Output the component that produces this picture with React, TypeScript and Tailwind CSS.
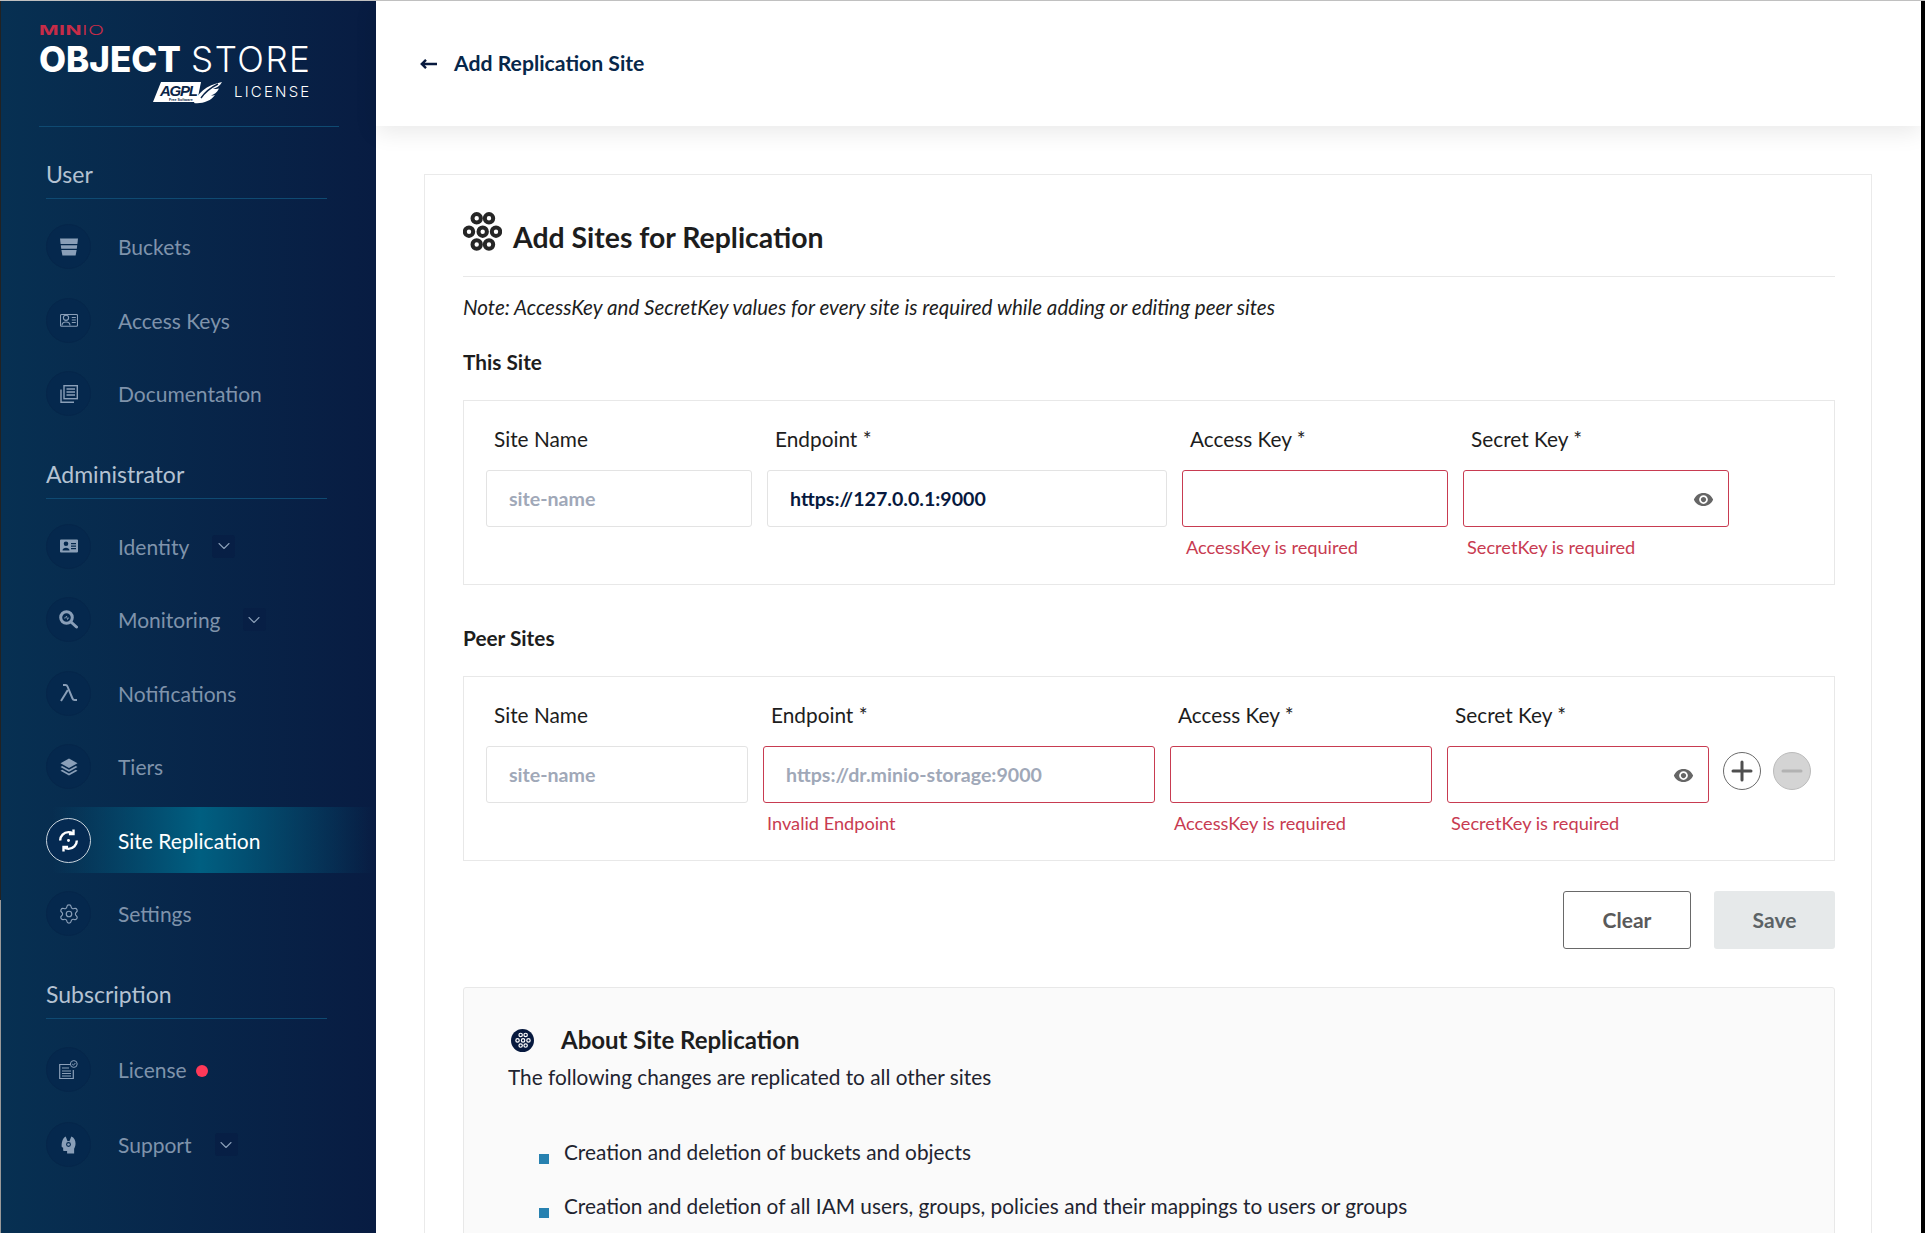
import type { ReactNode } from 'react';
import { ChevronDown, Settings } from 'lucide-react';

const EyeIcon = () => (
  <svg viewBox="0 0 24 24" className="w-[21px] h-[21px]" fill="#666">
    <path d="M12 4.5C7 4.5 2.73 7.61 1 12c1.73 4.39 6 7.5 11 7.5s9.27-3.11 11-7.5c-1.73-4.39-6-7.5-11-7.5zM12 17c-2.76 0-5-2.24-5-5s2.24-5 5-5 5 2.24 5 5-2.24 5-5 5zm0-8c-1.66 0-3 1.34-3 3s1.34 3 3 3 3-1.34 3-3-1.34-3-3-3z" />
  </svg>
);

const RingsIcon = ({ className, color, width }: { className: string; color: string; width: number }) => (
  <svg viewBox="0 0 39 42" className={className} fill="none" stroke={color} strokeWidth={width}>
    <circle cx="13.7" cy="7.3" r="4.2" />
    <circle cx="26" cy="7.3" r="4.2" />
    <circle cx="6" cy="20.7" r="4.2" />
    <circle cx="19.7" cy="20.7" r="4.2" />
    <circle cx="33" cy="20.7" r="4.2" />
    <circle cx="13.7" cy="33.5" r="4.2" />
    <circle cx="26" cy="33.5" r="4.2" />
  </svg>
);

const BucketIcon = () => (
  <svg viewBox="0 0 18 18" className="w-[18px] h-[18px]" fill="#8a9fb8">
    <path d="M0 0.5h18l-0.6 5.5H0.6z" />
    <path d="M0.8 7.2h16.4l-0.4 3.6H1.2z" />
    <path d="M1.4 12h15.2l-1 5.5H2.4z" />
  </svg>
);

const AccessIcon = () => (
  <svg viewBox="0 0 18 14" className="w-[18px] h-[14px]" fill="none" stroke="#8a9fb8" strokeWidth="1.1">
    <rect x="0.5" y="1.5" width="17" height="11.8" rx="1" />
    <circle cx="6" cy="4.8" r="2.6" />
    <path d="M2 12.5c0-4.6 8-4.6 8 0" />
    <path d="M11.8 4.5h4M11.8 7h4M11.8 9.5h4" />
  </svg>
);

const DocsIcon = () => (
  <svg viewBox="0 0 18 18" className="w-[18px] h-[18px]" fill="none" stroke="#8a9fb8" strokeWidth="1.4">
    <rect x="4" y="0.7" width="13.3" height="13" />
    <path d="M6.5 4h8.5M6.5 7h8.5M6.5 10h8.5" />
    <path d="M1 4.5v12.8h13" />
  </svg>
);

const IdentityIcon = () => (
  <svg viewBox="0 0 18 14" className="w-[18px] h-[14px]" fill="#8a9fb8">
    <path d="M1 0.5h16a1 1 0 0 1 1 1v11a1 1 0 0 1-1 1H1a1 1 0 0 1-1-1v-11a1 1 0 0 1 1-1zM6 2.5a2.3 2.3 0 1 0 0 4.6 2.3 2.3 0 0 0 0-4.6zM2.5 11.5h7c0-3.6-7-3.6-7 0zM11 4v1.2h5V4zM11 6.5v1.2h5V6.5zM11 9v1.2h5V9z" fillRule="evenodd" />
  </svg>
);

const MonitoringIcon = () => (
  <svg viewBox="0 0 19 19" className="w-[19px] h-[19px]" fill="none" stroke="#8a9fb8">
    <circle cx="7.5" cy="7.5" r="5.8" strokeWidth="3" />
    <path d="M12 12l5.5 5" strokeWidth="3" strokeLinecap="round" />
    <path d="M5 8h1.5l1-2 1 3.5.6-1.5h1" strokeWidth="0.8" />
  </svg>
);

const LambdaIcon = () => (
  <svg viewBox="0 0 18 18" className="w-[18px] h-[18px]" fill="none" stroke="#8a9fb8" strokeWidth="2">
    <path d="M3 1h2.5c1 0 1.6.5 2 1.5l5 12c.4 1 1 1.5 2 1.5H17" />
    <path d="M7.8 6L1 17" />
  </svg>
);

const TiersIcon = () => (
  <svg viewBox="0 0 18 18" className="w-[18px] h-[18px]" fill="#8a9fb8">
    <path d="M9 0.5l8.5 4.7L9 10 0.5 5.2z" />
    <path d="M2.2 8l6.8 3.7L15.8 8l1.7 1L9 13.7 0.5 9z" />
    <path d="M2.2 11.8l6.8 3.7 6.8-3.7 1.7 1L9 17.5 0.5 12.8z" />
  </svg>
);

const LicenseIcon = () => (
  <svg viewBox="0 0 19 19" className="w-[19px] h-[19px]" fill="none" stroke="#8a9fb8">
    <path d="M11 4.5H0.7v14h13.6V10" strokeWidth="1.2" />
    <path d="M3 8h7M3 11h9M3 13.5h9M3 16h9" strokeWidth="1.2" />
    <circle cx="14.8" cy="4" r="3.4" strokeWidth="1" />
    <path d="M13.2 4l1.2 1.2 2-2.2" strokeWidth="1" />
  </svg>
);

const SupportIcon = () => (
  <svg viewBox="0 0 16 19" className="w-[15px] h-[18px]" fill="#8a9fb8">
    <path d="M5 0.5L7 5.5a3.5 3.5 0 0 1 2 0L11 0.5c3 1 4.5 4 4.5 7.5 0 2.5-.8 4.5-1.5 5.5V18.5H6.5v-2.5H3.5c-1 0-1.2-.8-1.2-1.5v-2L0.8 11.5C0.4 8 1.5 2 5 0.5z" />
    <circle cx="8" cy="9" r="2.6" fill="#052a50" />
    <circle cx="8" cy="9" r="1.4" fill="#8a9fb8" />
  </svg>
);

const SyncIcon = () => (
  <svg viewBox="0 0 24 24" className="w-[25px] h-[25px]" fill="none" stroke="#ffffff" strokeWidth="2.3">
    <path d="M20 12a8 8 0 0 1-8 8c-1.6 0-3-.4-4.2-1.2" />
    <path d="M4 12a8 8 0 0 1 8-8c1.6 0 3 .4 4.2 1.2" />
    <path d="M16.8 1.5v4.4h-4.4" />
    <path d="M7.2 22.5v-4.4h4.4" />
    <circle cx="12" cy="12" r="1.4" fill="#ffffff" stroke="none" />
  </svg>
);

const SectionTitle = ({ title, className }: { title: string; className: string }) => (
  <div className={`ml-[45px] w-[281px] h-[37px] pb-[12px] border-b border-[#0f4a72] text-[23px] leading-[24px] text-[#b4c2d2] ${className}`}>
    {title}
  </div>
);

const NavItem = ({
  label,
  icon,
  chevron,
  chevronGap,
  dot,
  className = '',
}: {
  label: string;
  icon: ReactNode;
  chevron?: boolean;
  chevronGap?: string;
  dot?: boolean;
  className?: string;
}) => (
  <div className={`h-[73.5px] pl-[45px] flex items-center ${className}`}>
    <div className="w-[45px] h-[45px] rounded-full bg-[#05284d] border border-[#05264a] flex items-center justify-center">
      {icon}
    </div>
    <span className="ml-[27px] text-[21px] text-[#7f93ab]">{label}</span>
    {chevron && (
      <div className={`w-[23px] h-[23px] rounded-[3px] bg-[#071f45] flex items-center justify-center ${chevronGap}`}>
        <ChevronDown size={20} strokeWidth={1.3} color="#8a9fb8" />
      </div>
    )}
    {dot && <div className="ml-[9px] mt-[3px] w-[12px] h-[12px] rounded-full bg-[#ff3958]" />}
  </div>
);

const ActiveItem = ({ label }: { label: string }) => (
  <div className="h-[73.5px] flex items-center">
    <div className="ml-[51px] w-[322px] h-[66px] flex items-center bg-[linear-gradient(90deg,rgba(0,95,129,0)_0%,#005f81_46%,rgba(0,95,129,0)_100%)]">
      <div className="-ml-[6px] w-[45px] h-[45px] rounded-full bg-[#052a52] border-[1.5px] border-[#c9d4dd] flex items-center justify-center">
        <SyncIcon />
      </div>
      <span className="ml-[27px] text-[21px] text-white">{label}</span>
    </div>
  </div>
);

const Logo = () => (
  <div className="ml-[38px] w-[300px] h-[126px] pt-[21px] border-b border-[#0f4a72]">
    <div className="h-[16px] text-[13px] leading-[16px] tracking-[0.3px] text-[#c72c48] font-['Inter',sans-serif] origin-left scale-x-[1.62] whitespace-nowrap">
      <span className="font-bold">MIN</span>
      <span className="font-light">IO</span>
    </div>
    <div className="mt-[1px] h-[40px] text-[35px] leading-[40px] text-white font-['Inter',sans-serif] whitespace-nowrap">
      <span className="font-extrabold">OBJECT</span>
      <span className="font-light ml-[10px] tracking-[1.5px]">STORE</span>
    </div>
    <div className="mt-[1px] flex items-center">
      <svg viewBox="0 0 70 24" className="ml-[114px] w-[70px] h-[24px]">
        <path d="M8 2h40l-4 20H0z" fill="#ffffff" />
        <text x="7" y="15.5" fontFamily="Liberation Sans, sans-serif" fontStyle="italic" fontWeight="700" fontSize="15" fill="#0b2447" textLength="38">AGPL</text>
        <text x="16" y="20.5" fontFamily="Liberation Sans, sans-serif" fontSize="3.6" fontWeight="700" fill="#0b2447">Free Software</text>
        <path d="M41 23c3-9 12-18 28-21-2 4-6 6-9 7 2 0 4 0 6-.5-2 4-5 6-8 7 1 0 3 0 4-.5-4 6-13 9-21 8z" fill="#ffffff" />
        <path d="M48 18c4-6 9-10 17-14" stroke="#0b2447" strokeWidth="1.4" fill="none" />
      </svg>
      <span className="ml-[11px] text-[15px] leading-[20px] tracking-[2.2px] text-white font-['Inter',sans-serif] font-light">LICENSE</span>
    </div>
  </div>
);

const Sidebar = () => (
  <aside className="w-[375px] h-full shrink-0 bg-[linear-gradient(90deg,#073052_0%,#081c42_100%)]">
    <Logo />
    <SectionTitle title="User" className="mt-[35px]" />
    <div className="mt-[11px]">
      <NavItem label="Buckets" icon={<BucketIcon />} />
      <NavItem label="Access Keys" icon={<AccessIcon />} />
      <NavItem label="Documentation" icon={<DocsIcon />} />
    </div>
    <SectionTitle title="Administrator" className="mt-[31px]" />
    <div className="mt-[11px]">
      <NavItem label="Identity" icon={<IdentityIcon />} chevron chevronGap="ml-[23px]" />
      <NavItem label="Monitoring" icon={<MonitoringIcon />} chevron chevronGap="ml-[22px]" />
      <NavItem label="Notifications" icon={<LambdaIcon />} />
      <NavItem label="Tiers" icon={<TiersIcon />} />
      <ActiveItem label="Site Replication" />
      <NavItem label="Settings" icon={<Settings size={22} strokeWidth={1.3} color="#8a9fb8" />} />
    </div>
    <SectionTitle title="Subscription" className="mt-[31px]" />
    <div className="mt-[14px]">
      <NavItem label="License" icon={<LicenseIcon />} dot />
      <NavItem label="Support" icon={<SupportIcon />} chevron chevronGap="ml-[23px]" className="mt-[2px]" />
    </div>
  </aside>
);

const Field = ({
  label,
  width,
  placeholder,
  value,
  error,
  eye,
}: {
  label: string;
  width: string;
  placeholder?: string;
  value?: string;
  error?: string;
  eye?: boolean;
}) => (
  <div className={`${width} shrink-0`}>
    <div className="pl-[8px] h-[24px] text-[20.8px] leading-[24px] text-[#1d1d1d] mb-[19px]">{label}</div>
    <div className="relative h-[57px]">
      <input
        readOnly
        placeholder={placeholder}
        value={value ?? ''}
        className={`w-full h-full px-[22px] rounded-[3px] border outline-none bg-white text-[19.6px] font-bold text-[#07193e] placeholder:text-[#a0a8b8] ${
          error ? 'border-[#c83b51]' : 'border-[#e3e3e3]'
        }`}
      />
      {eye && (
        <div className="absolute right-[15px] top-[19px] flex">
          <EyeIcon />
        </div>
      )}
    </div>
    {error && <div className="mt-[10px] pl-[4px] h-[20px] text-[18.2px] leading-[20px] text-[#c83b51]">{error}</div>}
  </div>
);

const ThisSite = () => (
  <div className="mt-[26px] h-[185px] border border-[#e8e8e8] pl-[22px] pt-[26px] flex gap-[15px]">
    <Field label="Site Name" width="w-[266px]" placeholder="site-name" />
    <Field label="Endpoint *" width="w-[400px]" value="https://127.0.0.1:9000" />
    <Field label="Access Key *" width="w-[266px]" error="AccessKey is required" />
    <Field label="Secret Key *" width="w-[266px]" error="SecretKey is required" eye />
  </div>
);

const PeerSites = () => (
  <div className="mt-[26px] h-[185px] border border-[#e8e8e8] pl-[22px] pt-[26px] flex">
    <Field label="Site Name" width="w-[262px] mr-[15px]" placeholder="site-name" />
    <Field label="Endpoint *" width="w-[392px] mr-[15px]" placeholder="https://dr.minio-storage:9000" error="Invalid Endpoint" />
    <Field label="Access Key *" width="w-[262px] mr-[15px]" error="AccessKey is required" />
    <Field label="Secret Key *" width="w-[262px]" error="SecretKey is required" eye />
    <div className="ml-[14px] mt-[49px] flex gap-[12px] items-start">
      <div className="w-[38px] h-[38px] rounded-full border border-[#6b6b6b] bg-white flex items-center justify-center">
        <svg viewBox="0 0 22 22" className="w-[22px] h-[22px]" stroke="#4f4f4f" strokeWidth="3" strokeLinecap="round">
          <path d="M11 2v18M2 11h18" />
        </svg>
      </div>
      <div className="w-[38px] h-[38px] rounded-full border border-[#bbbbbb] bg-[#d4d4d4] flex items-center justify-center">
        <svg viewBox="0 0 22 22" className="w-[22px] h-[22px]" stroke="#b2b2b2" strokeWidth="3" strokeLinecap="round">
          <path d="M2 11h18" />
        </svg>
      </div>
    </div>
  </div>
);

const About = () => (
  <div className="mt-[38px] h-[400px] rounded-[3px] border border-[#e8e8e8] bg-[#fafafa] pl-[44px] pt-[40px] text-[20.8px] leading-[24px] text-[#1f2430]">
    <div className="flex items-center h-[24px]">
      <div className="ml-[3px] w-[23px] h-[23px] rounded-full bg-[#07193e] flex items-center justify-center">
        <RingsIcon className="w-[16px] h-[17px]" color="#ffffff" width={3} />
      </div>
      <span className="ml-[27px] text-[24px] font-bold text-[#1d1d1d]">About Site Replication</span>
    </div>
    <div className="mt-[13px]">The following changes are replicated to all other sites</div>
    <ul className="mt-[51px] ml-[31px] flex flex-col gap-[30px]">
      <li className="flex items-start">
        <span className="mt-[14px] mr-[15px] w-[10px] h-[10px] bg-[#2781b0] shrink-0" />
        Creation and deletion of buckets and objects
      </li>
      <li className="flex items-start">
        <span className="mt-[14px] mr-[15px] w-[10px] h-[10px] bg-[#2781b0] shrink-0" />
        Creation and deletion of all IAM users, groups, policies and their mappings to users or groups
      </li>
    </ul>
  </div>
);

export default function App() {
  return (
    <div className="w-[1925px] h-[1233px] overflow-hidden flex bg-white border-t border-[#c0c0c0] font-['Lato',sans-serif]">
      <div className="w-px h-full shrink-0 bg-[linear-gradient(#222222_73%,#999999_73%)]" />
      <Sidebar />
      <main className="flex-1 min-w-0 h-full">
        <header className="relative z-10 h-[125px] bg-white flex items-center shadow-[0_6px_22px_rgba(0,0,0,0.09)]">
          <svg viewBox="0 0 17 10" className="ml-[44px] w-[17px] h-[10px]" fill="none" stroke="#07193e" strokeWidth="2.4">
            <path d="M17 5H2M6 0.8L1.8 5 6 9.2" />
          </svg>
          <span className="ml-[17px] text-[21.2px] font-bold text-[#07274a]">Add Replication Site</span>
        </header>
        <div className="ml-[48px] mt-[48px] w-[1448px] h-[1100px] border border-[#eaeaea] pl-[38px] pr-[36px] pt-[36px]">
          <div className="h-[66px] border-b border-[#e8e8e8] flex items-start">
            <RingsIcon className="w-[39px] h-[42px]" color="#262626" width={4} />
            <span className="ml-[11px] text-[28.4px] leading-[52px] font-bold text-[#1d1d1d]">Add Sites for Replication</span>
          </div>
          <div className="mt-[18px] text-[20.6px] leading-[24px] italic text-[#1d1d1d]">
            Note: AccessKey and SecretKey values for every site is required while adding or editing peer sites
          </div>
          <div className="mt-[31px] text-[20.8px] leading-[24px] font-bold text-[#1d1d1d]">This Site</div>
          <ThisSite />
          <div className="mt-[41px] text-[20.8px] leading-[24px] font-bold text-[#1d1d1d]">Peer Sites</div>
          <PeerSites />
          <div className="mt-[30px] flex justify-end gap-[23px]">
            <button className="w-[128px] h-[58px] rounded-[3px] border border-[#696969] bg-white text-[21px] font-bold text-[#5a5a5a]">Clear</button>
            <button className="w-[121px] h-[58px] rounded-[3px] bg-[#e6e9ea] text-[21px] font-bold text-[#5c6366]">Save</button>
          </div>
          <About />
        </div>
      </main>
      <div className="w-[4px] h-full shrink-0 bg-black" />
    </div>
  );
}
